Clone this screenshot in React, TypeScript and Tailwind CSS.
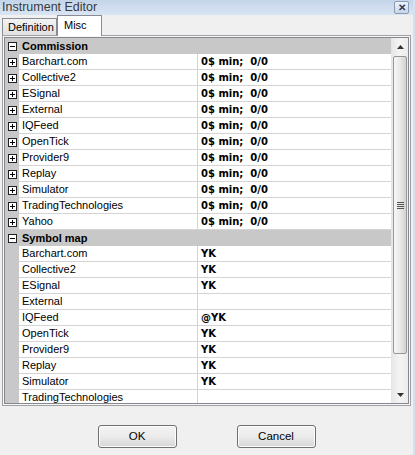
import React from 'react';

const providers = [
  'Barchart.com',
  'Collective2',
  'ESignal',
  'External',
  'IQFeed',
  'OpenTick',
  'Provider9',
  'Replay',
  'Simulator',
  'TradingTechnologies',
  'Yahoo',
];

// only the rows that are visible in the viewport
const symbolMap: [string, string][] = [
  ['Barchart.com', 'YK'],
  ['Collective2', 'YK'],
  ['ESignal', 'YK'],
  ['External', ''],
  ['IQFeed', '@YK'],
  ['OpenTick', 'YK'],
  ['Provider9', 'YK'],
  ['Replay', 'YK'],
  ['Simulator', 'YK'],
  ['TradingTechnologies', ''],
];

const ExpandBox = ({ open }: { open?: boolean }) => (
  <svg width="9" height="9" viewBox="0 0 9 9" className="block">
    <rect x="0.5" y="0.5" width="8" height="8" fill="#fff" stroke="#222" />
    <line x1="2" y1="4.5" x2="7" y2="4.5" stroke="#000" />
    {!open && <line x1="4.5" y1="2" x2="4.5" y2="7" stroke="#000" />}
  </svg>
);

const Category = ({ label }: { label: string }) => (
  <div className="flex h-[16px] items-center bg-[#c8c8c8]">
    <div className="flex w-[14px] justify-center pl-[1px]">
      <ExpandBox open />
    </div>
    <span className="pl-[3px] font-bold text-[11px] leading-[16px] text-black">{label}</span>
  </div>
);

const Row = ({ name, value, expandable }: { name: string; value: string; expandable?: boolean }) => (
  <div className="flex h-[16px]">
    <div className="flex w-[14px] items-center justify-center bg-[#c8c8c8] pl-[1px]">
      {expandable && <ExpandBox />}
    </div>
    <div className="w-[179px] border-r border-b border-[#d4d4d4] bg-white pl-[3px] text-[11px] leading-[15px] text-black">
      {name}
    </div>
    <div className="flex-1 whitespace-pre border-b border-[#d4d4d4] bg-white pl-[3px] font-['DejaVu_Sans',sans-serif] font-bold text-[10px] leading-[15px] text-black">
      {value}
    </div>
  </div>
);

const Arrow = ({ up }: { up?: boolean }) => (
  <svg width="7" height="4" viewBox="0 0 7 4" className="block">
    {up ? <polygon points="0,4 7,4 3.5,0" fill="#333" /> : <polygon points="0,0 7,0 3.5,4" fill="#333" />}
  </svg>
);

const Button = ({ label }: { label: string }) => (
  <button className="flex h-[23px] w-[79px] items-center justify-center rounded-[3px] border border-[#707070] bg-gradient-to-b from-[#f4f4f4] via-[#ebebeb] to-[#d6d6d6] text-[11.5px] leading-[21px] text-black shadow-[inset_0_0_0_1px_#fcfcfc]">
    {label}
  </button>
);

export default function App() {
  return (
    <div className="relative flex h-[455px] w-[415px] flex-col overflow-hidden border-r-2 border-[#d5e1ef] bg-[#f0f0f0] font-['Liberation_Sans',Arial,sans-serif]">
      {/* Title bar */}
      <div className="flex h-[15px] items-center justify-between bg-gradient-to-b from-[#c4d5e9] to-[#d9e5f3] pl-[2px] pr-[4px]">
        <span className="text-[12.5px] leading-[15px] text-[#3a3a3a]">Instrument Editor</span>
        <div className="flex h-[13px] w-[15px] items-center justify-center rounded-[2px] border border-[#8a9bb3] bg-gradient-to-b from-[#eef3fa] to-[#c9d6e8] text-[10px] font-bold leading-none text-[#2d3b52]">
          ✕
        </div>
      </div>

      {/* Tabs */}
      <div className="flex h-[20px] items-end pl-[2px]">
        <div className="h-[17px] w-[55px] border border-b-0 border-[#898c95] bg-gradient-to-b from-[#f3f3f3] to-[#e1e1e1] pl-[5px] text-[11px] leading-[16px] text-black">
          Definition
        </div>
        <div className="relative z-10 -mb-px h-[21px] w-[45px] border border-b-0 border-[#898c95] bg-white pl-[6px] text-[11px] leading-[19px] text-black">
          Misc
        </div>
      </div>

      {/* Property grid */}
      <div className="ml-[2px] h-[371px] w-[409px] border border-[#a0a0a0] bg-[#f7f7f7] p-px">
        <div className="flex h-full border border-[#828790] bg-white">
          <div className="flex-1 overflow-hidden">
            <Category label="Commission" />
            {providers.map((p) => (
              <Row key={p} name={p} value="0$ min;  0/0" expandable />
            ))}
            <Category label="Symbol map" />
            {symbolMap.map(([p, v]) => (
              <Row key={'s' + p} name={p} value={v} />
            ))}
          </div>
          {/* Scrollbar */}
          <div className="flex w-[17px] flex-col border-l border-[#e6e6e6] bg-gradient-to-r from-[#e8e8e8] via-[#f4f4f4] to-[#ececec]">
            <div className="flex h-[17px] items-center justify-center">
              <Arrow up />
            </div>
            <div className="mx-[1px] mt-[1px] flex h-[298px] items-center justify-center rounded-[2px] border border-[#979797] bg-gradient-to-r from-[#f6f6f6] via-[#e9e9e9] to-[#d2d2d2]">
              <div className="flex flex-col gap-[1px]">
                <div className="h-px w-[7px] bg-[#555]" />
                <div className="h-px w-[7px] bg-[#555]" />
                <div className="h-px w-[7px] bg-[#555]" />
                <div className="h-px w-[7px] bg-[#555]" />
              </div>
            </div>
            <div className="mt-auto flex h-[17px] items-center justify-center">
              <Arrow />
            </div>
          </div>
        </div>
      </div>

      {/* Buttons */}
      <div className="flex justify-center gap-[60px] pt-[19px]">
        <Button label="OK" />
        <Button label="Cancel" />
      </div>
    </div>
  );
}
